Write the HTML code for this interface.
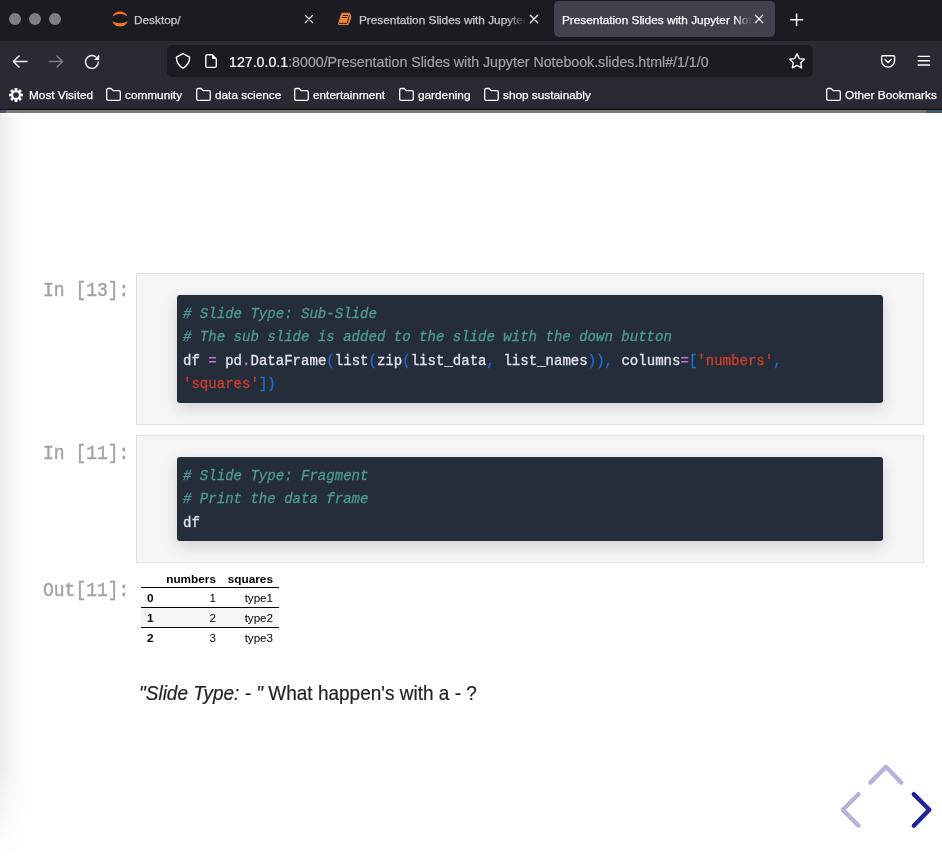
<!DOCTYPE html>
<html><head><meta charset="utf-8">
<style>
*{margin:0;padding:0;box-sizing:border-box}
html,body{width:942px;height:866px;overflow:hidden;background:#fff;font-family:"Liberation Sans",sans-serif}
body>*{will-change:transform}
.abs{position:absolute}
#tabbar{position:absolute;left:0;top:0;width:942px;height:41px;background:#1c1b22}
.dot{position:absolute;top:13px;width:12px;height:12px;border-radius:50%;background:#7f7f83}
.tabtxt{-webkit-text-stroke:0.25px currentColor;position:absolute;top:13px;font-size:11.8px;line-height:14px;white-space:nowrap;overflow:hidden}
#navbar{position:absolute;left:0;top:41px;width:942px;height:68px;background:#2b2a33}
#urlbar{position:absolute;left:167px;top:45px;width:646px;height:32px;background:#1c1b22;border-radius:5px}
.bm{-webkit-text-stroke:0.25px currentColor;position:absolute;top:88px;font-size:11.8px;line-height:14px;color:#fbfbfe;white-space:nowrap}
#page{position:absolute;left:0;top:113px;width:942px;height:753px;background:#fff;overflow:hidden}
#shade{position:absolute;left:0;top:0;width:28px;height:753px;background:linear-gradient(to right,#ebebeb,#f5f5f5 11px,#fff 28px);-webkit-mask-image:linear-gradient(to bottom,transparent 0,#000 2px,#000 650px,transparent 745px)}
.prompt{-webkit-text-stroke:0.4px currentColor;position:absolute;font-family:"Liberation Mono",monospace;font-size:18px;line-height:20px;color:#a2a2a2;white-space:pre;transform:scaleY(1.08);transform-origin:0 15px}
.cellbox{position:absolute;left:136px;width:788px;background:#f5f5f5;border:1px solid #e0e0e0}
.code{-webkit-text-stroke:0.3px currentColor;position:absolute;left:177px;width:706px;background:#262d3a;box-shadow:0 5px 15px rgba(0,0,0,0.15);font-family:"Liberation Mono",monospace;font-size:14.05px;line-height:23.45px;color:#e2e2ee;padding:8px 6px;white-space:pre;border-radius:3px}
.cm{color:#4c9a8f;font-style:italic}
.op{color:#c678dd}
.pn{color:#1f6ecf}
.st{color:#d03d2b}
.td{position:absolute;font-size:11.6px;line-height:14px;color:#000;white-space:nowrap}
.b{font-weight:bold;font-size:11.8px}
.r{text-align:right}
</style></head><body>
<div id="tabbar">
  <div class="dot" style="left:9px"></div>
  <div class="dot" style="left:29px"></div>
  <div class="dot" style="left:49px"></div>
  <div class="tabtxt" style="left:134px;color:#c9c9cc">Desktop/</div>
  <div class="tabtxt" style="left:359px;width:167px;color:#c9c9cc;-webkit-mask-image:linear-gradient(to right,#000 148px,transparent 168px)">Presentation Slides with Jupyter</div>
  <div class="abs" style="left:554px;top:1px;width:221px;height:36px;background:#42414d;border-radius:5px"></div>
  <div class="tabtxt" style="left:562px;width:190px;color:#fbfbfe;-webkit-mask-image:linear-gradient(to right,#000 172px,transparent 190px)">Presentation Slides with Jupyter Notebook</div>
</div>
<div id="navbar"></div>
<div id="urlbar"></div>
<div class="abs" style="left:229px;top:54px;-webkit-text-stroke:0.2px currentColor;font-size:14.2px;line-height:16px;color:#fbfbfe;white-space:nowrap">127.0.0.1<span style="color:#a0a0a6">:8000/Presentation Slides with Jupyter Notebook.slides.html#/1/1/0</span></div>
<div class="bm" style="left:29px">Most Visited</div>
<div class="bm" style="left:125px">community</div>
<div class="bm" style="left:215px">data science</div>
<div class="bm" style="left:313px">entertainment</div>
<div class="bm" style="left:418px">gardening</div>
<div class="bm" style="left:503px">shop sustainably</div>
<div class="bm" style="left:845px">Other Bookmarks</div>
<div class="abs" style="left:0;top:109px;width:942px;height:1px;background:#0c0c0e"></div>
<div class="abs" style="left:0;top:110px;width:942px;height:3px;background:#787878"></div>
<div class="abs" style="left:0;top:110px;width:6px;height:3px;background:#4a5a70"></div>
<div class="abs" style="left:926px;top:110px;width:16px;height:3px;background:#4a5a70"></div>

<svg class="abs" style="left:0;top:0" width="942" height="113" viewBox="0 0 942 113">
  <!-- jupyter icon -->
  <path d="M112.3,16.4 A8.43,8.43 0 0 1 127.7,16.4 A13.55,13.55 0 0 0 112.3,16.4 Z" fill="#f37726"/>
  <path d="M112.3,21.3 A8.3,8.3 0 0 0 127.7,21.3 A16.55,16.55 0 0 1 112.3,21.3 Z" fill="#f37726"/>
  <!-- book icon -->
  <path d="M341.7,13.2 H349.6 L350.4,15.3 L350.9,16.2 L350.4,18.6 L348.1,24.6 H338.7 L338.4,24 Z" fill="#f6862e" stroke="#f6862e" stroke-width="0.9" stroke-linejoin="round"/>
  <g stroke="#1c1b22" stroke-width="0.95" fill="none" stroke-linecap="round">
    <line x1="343.2" y1="15.5" x2="347.6" y2="15.5"/>
    <line x1="342.3" y1="17.5" x2="346.7" y2="17.5"/>
    <path d="M339.3,23.4 H347.2 L349.2,15.6"/>
  </g>
  <!-- close X -->
  <g stroke="#fbfbfe" stroke-width="1.3" stroke-linecap="round">
    <path d="M305.4,15.4 L312.6,22.6 M312.6,15.4 L305.4,22.6"/>
    <path d="M530.3,15.3 L537.7,22.7 M537.7,15.3 L530.3,22.7"/>
    <path d="M755.4,15.3 L762.7,22.6 M762.7,15.3 L755.4,22.6"/>
    <path d="M796.6,14 V25.6 M790.8,19.7 H802.5" stroke-width="1.5"/>
  </g>
  <!-- nav icons -->
  <g stroke="#fbfbfe" stroke-width="1.4" stroke-linecap="round" stroke-linejoin="round" fill="none">
    <path d="M27,61.5 H13.3 M19,56 L13.3,61.5 L19,67"/>
    <path d="M49,61.5 H62.7 M57,56 L62.7,61.5 L57,67" stroke="#7c7b82"/>
    <path d="M98.3,62 A6.4,6.4 0 1 1 95.6,56.7"/>
    <!-- shield -->
    <path d="M183,53.6 L176.4,57.2 Q176.4,64.4 183,68.2 Q189.6,64.4 189.6,57.2 Z"/>
    <!-- page -->
    <path d="M212.2,54.8 H207.2 Q205.8,54.8 205.8,56.2 V66 Q205.8,67.4 207.2,67.4 H214.9 Q216.3,67.4 216.3,66 V58.9 Z"/>
    <!-- star -->
    <path d="M797,53.8 L799.3,58.6 L804.4,59.2 L800.7,62.7 L801.6,67.8 L797,65.4 L792.4,67.8 L793.3,62.7 L789.6,59.2 L794.7,58.6 Z"/>
    <!-- pocket -->
    <path d="M882.6,55.7 H893.6 Q894.6,55.7 894.6,56.7 V60.6 A6.5,6.5 0 0 1 881.6,60.6 V56.7 Q881.6,55.7 882.6,55.7 Z"/>
    <path d="M885,59.6 L888.1,62.6 L891.2,59.6"/>
    <!-- hamburger -->
    <path d="M918.2,56.4 H929.6 M918.2,60.7 H929.6 M918.2,65 H929.6"/>
  </g>
  <path d="M94,59.9 L99.2,54.6 V59.9 Z" fill="#fbfbfe"/>
  <path d="M212,54.6 L216.5,59.1 H213 Q212,59.1 212,58 Z" fill="#fbfbfe"/>
  <!-- gear -->
  <path fill-rule="evenodd" fill="#fbfbfe" d="M14.55,90.32 L14.66,88.03 L17.34,88.03 L17.45,90.32 L18.29,90.67 L19.98,89.12 L21.88,91.02 L20.33,92.71 L20.68,93.55 L22.97,93.66 L22.97,96.34 L20.68,96.45 L20.33,97.29 L21.88,98.98 L19.98,100.88 L18.29,99.33 L17.45,99.68 L17.34,101.97 L14.66,101.97 L14.55,99.68 L13.71,99.33 L12.02,100.88 L10.12,98.98 L11.67,97.29 L11.32,96.45 L9.03,96.34 L9.03,93.66 L11.32,93.55 L11.67,92.71 L10.12,91.02 L12.02,89.12 L13.71,90.67 Z M18.8,95 A2.8,2.8 0 1 0 13.2,95 A2.8,2.8 0 1 0 18.8,95 Z"/>
  <!-- folders -->
  <g stroke="#fbfbfe" stroke-width="1.3" fill="none" stroke-linejoin="round">
    <path transform="translate(0,0)" d="M106.7,99 V89.9 Q106.7,88.5 108.1,88.5 H111.2 L113.2,90.6 H118.9 Q120.3,90.6 120.3,92 V99 Q120.3,100.4 118.9,100.4 H108.1 Q106.7,100.4 106.7,99 Z"/>
    <path transform="translate(90,0)" d="M106.7,99 V89.9 Q106.7,88.5 108.1,88.5 H111.2 L113.2,90.6 H118.9 Q120.3,90.6 120.3,92 V99 Q120.3,100.4 118.9,100.4 H108.1 Q106.7,100.4 106.7,99 Z"/>
    <path transform="translate(188,0)" d="M106.7,99 V89.9 Q106.7,88.5 108.1,88.5 H111.2 L113.2,90.6 H118.9 Q120.3,90.6 120.3,92 V99 Q120.3,100.4 118.9,100.4 H108.1 Q106.7,100.4 106.7,99 Z"/>
    <path transform="translate(293,0)" d="M106.7,99 V89.9 Q106.7,88.5 108.1,88.5 H111.2 L113.2,90.6 H118.9 Q120.3,90.6 120.3,92 V99 Q120.3,100.4 118.9,100.4 H108.1 Q106.7,100.4 106.7,99 Z"/>
    <path transform="translate(378,0)" d="M106.7,99 V89.9 Q106.7,88.5 108.1,88.5 H111.2 L113.2,90.6 H118.9 Q120.3,90.6 120.3,92 V99 Q120.3,100.4 118.9,100.4 H108.1 Q106.7,100.4 106.7,99 Z"/>
    <path transform="translate(720,0)" d="M106.7,99 V89.9 Q106.7,88.5 108.1,88.5 H111.2 L113.2,90.6 H118.9 Q120.3,90.6 120.3,92 V99 Q120.3,100.4 118.9,100.4 H108.1 Q106.7,100.4 106.7,99 Z"/>
  </g>
</svg>

<div id="page"><div id="shade"></div></div>

<div class="prompt" style="left:43px;top:281px">In [13]:</div>
<div class="cellbox" style="top:273px;height:152px"></div>
<div class="code" style="top:295px;height:108px"><span class="cm"># Slide Type: Sub-Slide</span>
<span class="cm"># The sub slide is added to the slide with the down button</span>
df <span class="op">=</span> pd<span class="op">.</span>DataFrame<span class="pn">(</span>list<span class="pn">(</span>zip<span class="pn">(</span>list_data<span class="pn">,</span> list_names<span class="pn">)),</span> columns<span class="op">=</span><span class="pn">[</span><span class="st">'numbers'</span><span class="pn">,</span>
<span class="st">'squares'</span><span class="pn">])</span></div>

<div class="prompt" style="left:43px;top:444px">In [11]:</div>
<div class="cellbox" style="top:435px;height:128px"></div>
<div class="code" style="top:457px;height:84px"><span class="cm"># Slide Type: Fragment</span>
<span class="cm"># Print the data frame</span>
df</div>

<div class="prompt" style="left:43px;top:581px">Out[11]:</div>

<!-- dataframe -->
<div class="abs" style="left:141px;top:607px;width:138px;height:20px;background:#f5f5f5"></div>
<div class="abs" style="left:141px;top:587px;width:138px;height:1px;background:#000"></div>
<div class="abs" style="left:141px;top:607px;width:138px;height:1px;background:#000"></div>
<div class="abs" style="left:141px;top:627px;width:138px;height:1px;background:#000"></div>
<div class="td b r" style="left:150px;top:572px;width:66px">numbers</div>
<div class="td b r" style="left:220px;top:572px;width:53px">squares</div>
<div class="td b" style="left:147px;top:591px">0</div>
<div class="td b" style="left:147px;top:611px">1</div>
<div class="td b" style="left:147px;top:631px">2</div>
<div class="td r" style="left:180px;top:591px;width:36px">1</div>
<div class="td r" style="left:180px;top:611px;width:36px">2</div>
<div class="td r" style="left:180px;top:631px;width:36px">3</div>
<div class="td r" style="left:220px;top:591px;width:53px">type1</div>
<div class="td r" style="left:220px;top:611px;width:53px">type2</div>
<div class="td r" style="left:220px;top:631px;width:53px">type3</div>

<div class="abs" style="left:139px;top:682.5px;-webkit-text-stroke:0.2px currentColor;transform:scaleY(1.075);transform-origin:0 17.3px;font-size:19px;line-height:22px;color:#222;white-space:pre"><i>"Slide Type: - "</i> What happen's with a - ?</div>

<svg class="abs" style="left:830px;top:750px" width="112" height="100" viewBox="830 750 112 100">
  <g fill="none" stroke-linecap="round" stroke-linejoin="round" stroke-width="4.4">
    <polyline points="870.4,782.6 885.9,766.8 901.3,782.6" stroke="#b3b3dc"/>
    <polyline points="858.5,794.2 842.8,809.7 858.5,825.7" stroke="#b3b3dc"/>
    <polyline points="913.8,794.2 929.3,809.7 913.8,825.7" stroke="#1f2498"/>
  </g>
</svg>
</body></html>
